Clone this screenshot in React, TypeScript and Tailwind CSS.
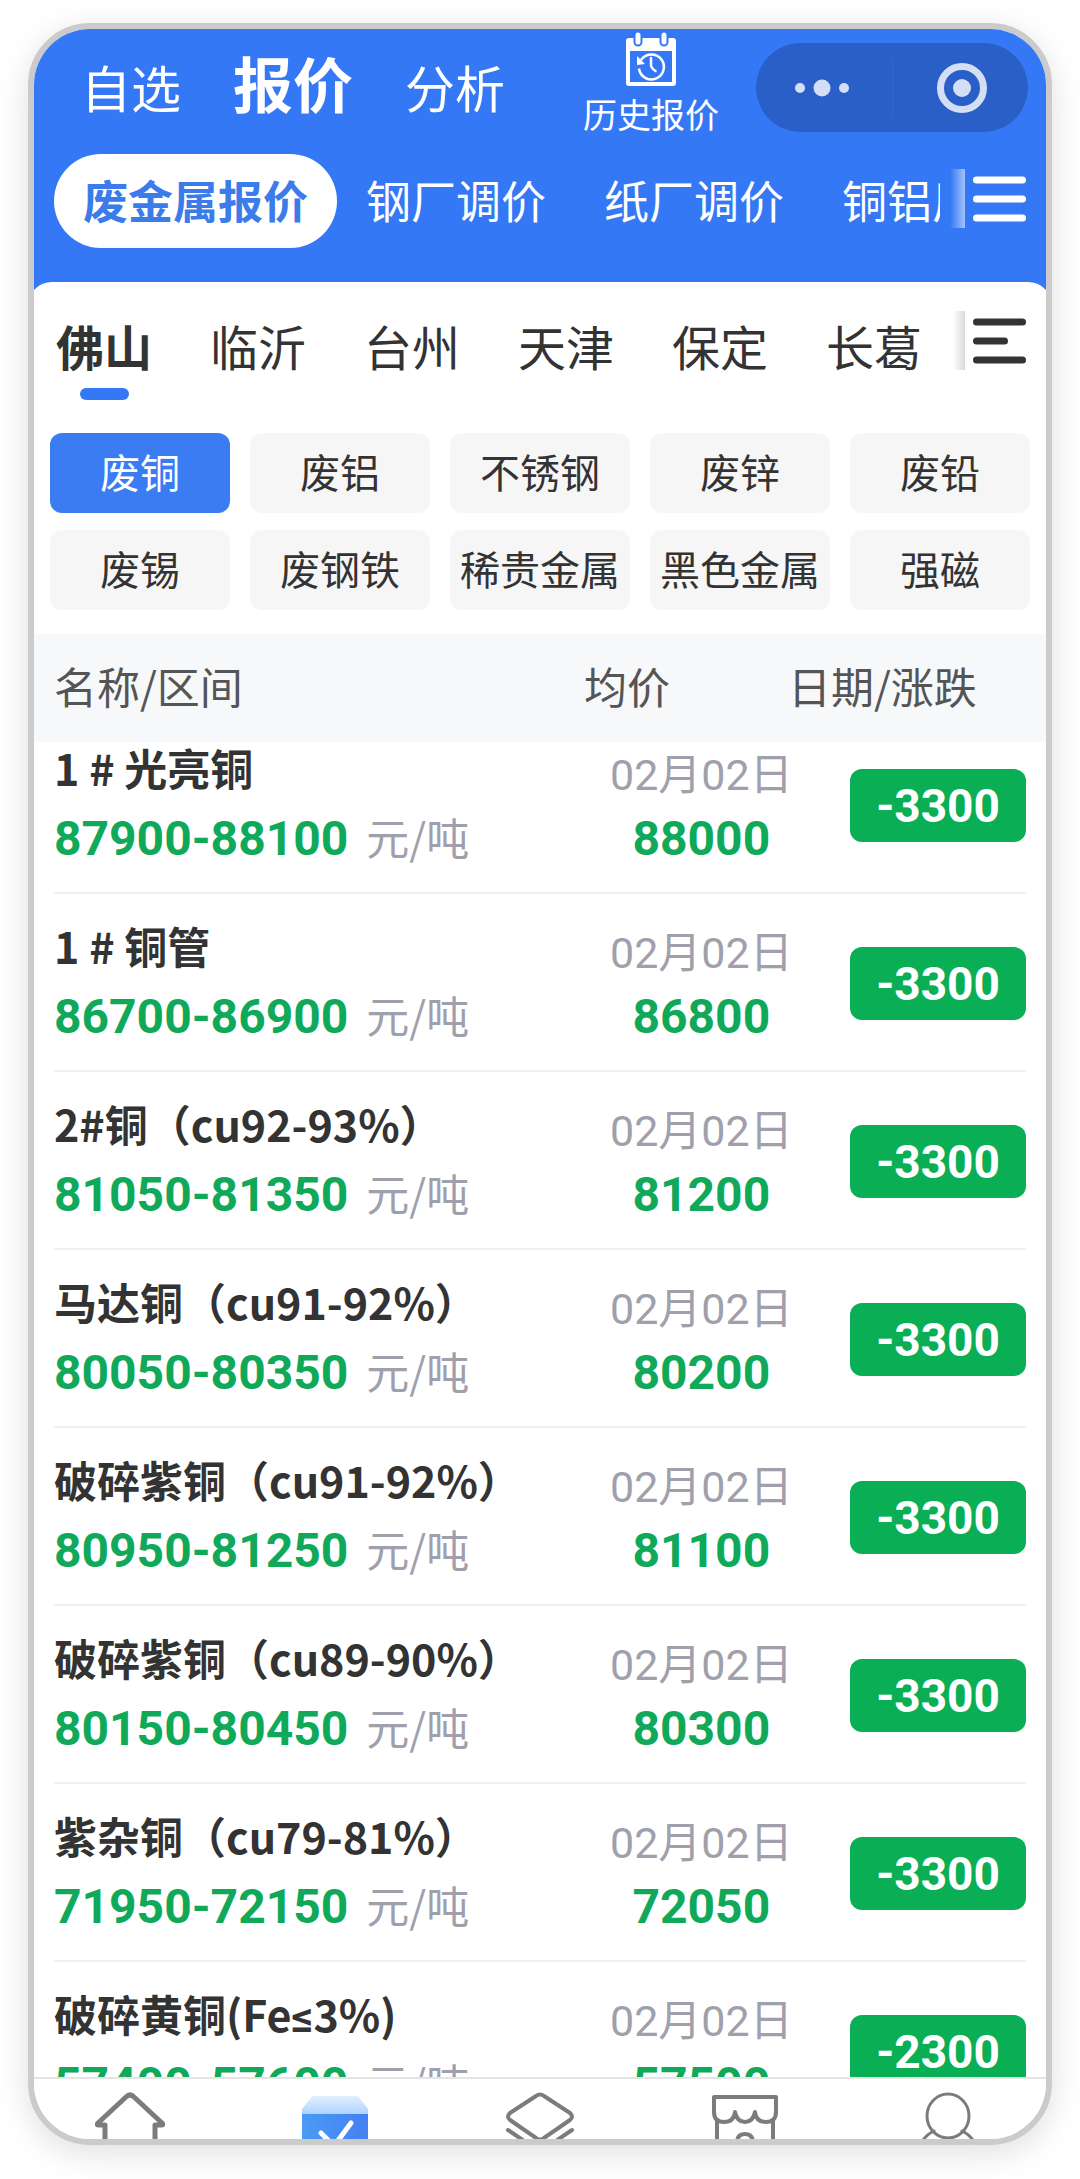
import { ReactNode, useState } from 'react';
import clsx from 'clsx';

type Quote = {
	name: string;
	range: string;
	date: string;
	avg: string;
	change: string;
};

const channels = ['自选', '报价', '分析'];
const markets = ['废金属报价', '钢厂调价', '纸厂调价', '铜铝厂调价'];
const cities = ['佛山', '临沂', '台州', '天津', '保定', '长葛'];
const metals = [
	'废铜',
	'废铝',
	'不锈钢',
	'废锌',
	'废铅',
	'废锡',
	'废钢铁',
	'稀贵金属',
	'黑色金属',
	'强磁',
];

const quotes: Quote[] = [
	{ name: '1 # 光亮铜', range: '87900-88100', date: '02月02日', avg: '88000', change: '-3300' },
	{ name: '1 # 铜管', range: '86700-86900', date: '02月02日', avg: '86800', change: '-3300' },
	{ name: '2#铜（cu92-93%）', range: '81050-81350', date: '02月02日', avg: '81200', change: '-3300' },
	{ name: '马达铜（cu91-92%）', range: '80050-80350', date: '02月02日', avg: '80200', change: '-3300' },
	{ name: '破碎紫铜（cu91-92%）', range: '80950-81250', date: '02月02日', avg: '81100', change: '-3300' },
	{ name: '破碎紫铜（cu89-90%）', range: '80150-80450', date: '02月02日', avg: '80300', change: '-3300' },
	{ name: '紫杂铜（cu79-81%）', range: '71950-72150', date: '02月02日', avg: '72050', change: '-3300' },
	{ name: '破碎黄铜(Fe≤3%)', range: '57400-57600', date: '02月02日', avg: '57500', change: '-2300' },
];

function HistoryIcon() {
	return (
		<svg width="52" height="54" viewBox="0 0 52 54" fill="none">
			<path
				d="M4 6h44a3 3 0 0 1 3 3v42a3 3 0 0 1-3 3H4a3 3 0 0 1-3-3V9a3 3 0 0 1 3-3Zm1 13v31h42V19H5Z"
				fill="#fff"
				fillRule="evenodd"
			/>
			<path d="M13 3v7M39 3v7" stroke="#3478f6" strokeWidth="9" strokeLinecap="round" />
			<path d="M13 3v7M39 3v7" stroke="#fff" strokeWidth="5" strokeLinecap="round" />
			<path d="M16 28a12.500 12.500 0 1 1-2 8.500" stroke="#fff" strokeWidth="2.500" />
			<path d="M12 24v9l8-1Z" fill="#fff" />
			<path d="M26 26v7c0 2 1.500 4 4.500 6" stroke="#fff" strokeWidth="2.500" strokeLinecap="round" />
		</svg>
	);
}

function Capsule() {
	return (
		<div className="mt-[14px] flex h-[89px] w-[272px] shrink-0 items-center rounded-full bg-[#295fc6]">
			<button aria-label="更多" className="flex h-14 flex-1 items-center justify-center border-r border-[#3468cb] pr-1">
				<svg width="54" height="18" viewBox="0 0 54 18" fill="#d4dff6">
					<circle cx="5" cy="9" r="5" />
					<circle cx="27" cy="9" r="8.500" />
					<circle cx="49" cy="9" r="5" />
				</svg>
			</button>
			<button aria-label="关闭" className="flex h-14 flex-1 items-center justify-center pl-1">
				<svg width="50" height="50" viewBox="0 0 50 50" fill="none">
					<circle cx="25" cy="25" r="21.500" stroke="#d4dff6" strokeWidth="7" />
					<circle cx="25" cy="25" r="9" fill="#d4dff6" />
				</svg>
			</button>
		</div>
	);
}

function MenuIcon({ short }: { short?: boolean }) {
	return (
		<svg width="53" height="46" viewBox="0 0 53 46" stroke="currentColor" strokeWidth="7" strokeLinecap="round">
			<path d={short ? 'M3.500 4h46M3.500 23h28M3.500 42h46' : 'M3.500 4h46M3.500 23h46M3.500 42h46'} />
		</svg>
	);
}

function NavIcon({ label, children }: { label: string; children: ReactNode }) {
	return (
		<button aria-label={label} className="h-[90px] w-[70px]">
			<svg width="70" height="90" viewBox="0 0 70 90" fill="none" stroke="#7c7c7c" strokeWidth="5" strokeLinecap="round" strokeLinejoin="round">
				{children}
			</svg>
		</button>
	);
}

function BottomNav() {
	return (
		<nav className="flex h-[62px] shrink-0 justify-between overflow-hidden border-t-2 border-[#e4e4e4] bg-white px-[61px]">
			<NavIcon label="首页">
				<path d="M10 80V46H3c-1 0-1-1 0-2l28-26q4-4 8 0l28 26c1 1 1 2 0 2h-7v34Z" />
			</NavIcon>
			<NavIcon label="报价">
				<defs>
					<linearGradient id="lid" x1="0" y1="0" x2="0" y2="1">
						<stop stopColor="#e4effd" />
						<stop offset="1" stopColor="#a9d3fe" />
					</linearGradient>
					<linearGradient id="box" x1="0" y1="0" x2="1" y2="0">
						<stop stopColor="#4a9bf5" />
						<stop offset="1" stopColor="#4480f2" />
					</linearGradient>
				</defs>
				<path d="M12 17h46l10 13v6H2v-6Z" fill="url(#lid)" stroke="none" />
				<path d="M2 35h66v45H2Z" fill="url(#box)" stroke="none" />
				<path d="M21 54l13 13 17-23" stroke="#fff" />
			</NavIcon>
			<NavIcon label="资讯">
				<path d="M31 17q4-3 8 0l26 17q4 4 0 7L39 59q-4 3-8 0L5 41q-4-3 0-7Z" strokeWidth="4" />
				<path d="M3 51l28 19q4 3 8 0l28-19" strokeWidth="4" />
			</NavIcon>
			<NavIcon label="商城">
				<path d="M4 18h62v15q0 10-10 10-10 0-11-10-2 10-10 10t-10-10q-1 10-11 10-10 0-10-10Z" strokeWidth="4" />
				<path d="M7 41v40h56V41M27 68V64q0-9 8-9t8 9v4" strokeWidth="4" />
			</NavIcon>
			<NavIcon label="我的">
				<ellipse cx="33" cy="37" rx="21" ry="22" strokeWidth="3" />
				<path d="M19 52q-9 4-14 14M47 52q9 4 14 14" strokeWidth="3" />
			</NavIcon>
		</nav>
	);
}

function QuoteRow({ quote, first }: { quote: Quote; first: boolean }) {
	// the list starts slightly scrolled, so the first row is shorter
	const cell = clsx(
		'flex flex-col justify-end border-b-2 border-[#eff0f1]',
		first ? 'h-[152px]' : 'h-[178px]'
	);
	// the CJK font draws "≤" full width, Roboto has a narrow one
	const [name, rest] = quote.name.split('≤');
	return (
		<tr>
			<td className="p-0 pl-5">
				<div className={clsx(cell, 'pb-[17px]')}>
					<div className="text-[43px] leading-[66px] font-bold whitespace-nowrap text-[#333]">
						{name}
						{rest && <span className="font-[Roboto] leading-none">≤</span>}
						{rest}
					</div>
					<div className="flex items-baseline gap-[18px] leading-[72px] whitespace-nowrap">
						<span className="font-[Roboto] text-[48px] font-bold text-[#10a95a]">{quote.range}</span>
						<span className="text-[43px] text-[#a09fac]">元/吨</span>
					</div>
				</div>
			</td>
			<td className="p-0">
				<div className={clsx(cell, 'pb-[17px]')}>
					<div className="ml-[26px] w-max text-center">
						<div className="font-[Roboto,'Noto_Sans_CJK_SC'] text-[43px] leading-[56px] text-[#a09fac]">{quote.date}</div>
						<div className="font-[Roboto] text-[48px] leading-[72px] font-bold text-[#10a95a]">{quote.avg}</div>
					</div>
				</div>
			</td>
			<td className="p-0 pr-5">
				<div className={clsx(cell, 'pb-[50px]')}>
					<div className="ml-auto h-[73px] w-[176px] rounded-xl bg-[#09ae55] text-center font-[Roboto] text-[46px] leading-[74px] font-bold text-white">
						{quote.change}
					</div>
				</div>
			</td>
		</tr>
	);
}

export default function App() {
	const [channel, setChannel] = useState('报价');
	const [market, setMarket] = useState('废金属报价');
	const [city, setCity] = useState('佛山');
	const [metal, setMetal] = useState('废铜');

	return (
		<div className="flex h-screen flex-col bg-white px-7 pt-[23px] pb-[34px] font-['Noto_Sans_CJK_SC',sans-serif]">
			<main className="flex min-h-0 flex-1 flex-col overflow-hidden rounded-[62px] border-6 border-[#cbcbcb] bg-white shadow-[0_8px_32px_rgba(0,0,0,0.13)]">
				<div className="shrink-0 bg-[#3478f6]">
					<header className="pb-[34px] text-white">
						<div className="flex h-[106px] items-start pr-[18px] pl-[47px]">
							<nav className="mt-[17px] flex items-baseline gap-[52px] leading-[72px] whitespace-nowrap">
								{channels.map((item) => (
									<button
										key={item}
										onClick={() => setChannel(item)}
										className={item === channel ? 'text-[60px] font-bold' : 'text-[50px]'}>
										{item}
									</button>
								))}
							</nav>
							<button className="mt-[3px] mr-[37px] ml-auto flex flex-col items-center gap-2">
								<HistoryIcon />
								<span className="text-[34px] leading-[40px] whitespace-nowrap">历史报价</span>
							</button>
							<Capsule />
						</div>
						<div className="mt-[19px] flex h-[94px] items-start px-5">
							<div className="flex min-w-0 flex-1 overflow-hidden text-[45px] leading-[92px]">
								{markets.map((item) => (
									<button
										key={item}
										onClick={() => setMarket(item)}
										className={clsx(
											'shrink-0 rounded-full px-[29px] pb-[2px] whitespace-nowrap',
											item === market && 'bg-white font-bold text-[#3b7bea]'
										)}>
										{item}
									</button>
								))}
							</div>
							<div className="ml-[10px] flex h-[89px] items-center gap-2">
								<div className="h-[59px] w-[15px] bg-linear-to-r from-white/0 to-white/55" />
								<button aria-label="全部分类">
									<MenuIcon />
								</button>
							</div>
						</div>
					</header>

					<section className="-mx-1.5 rounded-t-3xl bg-white px-[26px] pt-[29px] pb-6 text-[#333]">
						<div className="flex items-start justify-between">
							<div className="mt-[5px] flex gap-[58px] pl-[2px] text-[48px] leading-[58px]">
								{cities.map((item) => (
									<button
										key={item}
										onClick={() => setCity(item)}
										className={clsx(
											'flex shrink-0 flex-col items-center gap-[14px] whitespace-nowrap',
											item === city && 'font-bold'
										)}>
										{item}
										<span className={clsx('h-3 w-[49px] rounded-full', item === city && 'bg-[#3478f6]')} />
									</button>
								))}
							</div>
							<div className="flex items-center gap-2">
								<div className="h-[59px] w-[12px] bg-linear-to-r from-black/0 to-black/15" />
								<button aria-label="全部城市">
									<MenuIcon short />
								</button>
							</div>
						</div>
						<div className="-mx-1 mt-[33px] grid grid-cols-5 gap-x-5 gap-y-[17px]">
							{metals.map((item) => (
								<button
									key={item}
									onClick={() => setMetal(item)}
									className={clsx(
										'h-20 rounded-xl pb-1 text-[40px] whitespace-nowrap',
										item === metal ? 'bg-[#3c7cf3] text-white' : 'bg-[#f6f6f6]'
									)}>
									{item}
								</button>
							))}
						</div>
					</section>
				</div>

				<div className="min-h-0 flex-1 overflow-hidden">
					<table className="w-full table-fixed border-collapse">
						<colgroup>
							<col />
							<col className="w-[204px]" />
							<col className="w-[258px]" />
						</colgroup>
						<thead className="bg-[#f7f8fa] text-left text-[43px] whitespace-nowrap text-[#555]">
							<tr className="h-[108px]">
								<th className="p-0 pb-1.5 pl-5 font-normal">名称/区间</th>
								<th className="p-0 pb-1.5 font-normal">均价</th>
								<th className="p-0 pb-1.5 font-normal">日期/涨跌</th>
							</tr>
						</thead>
						<tbody>
							{quotes.map((quote, i) => (
								<QuoteRow key={quote.name} quote={quote} first={i === 0} />
							))}
						</tbody>
					</table>
				</div>

				<BottomNav />
			</main>
		</div>
	);
}
